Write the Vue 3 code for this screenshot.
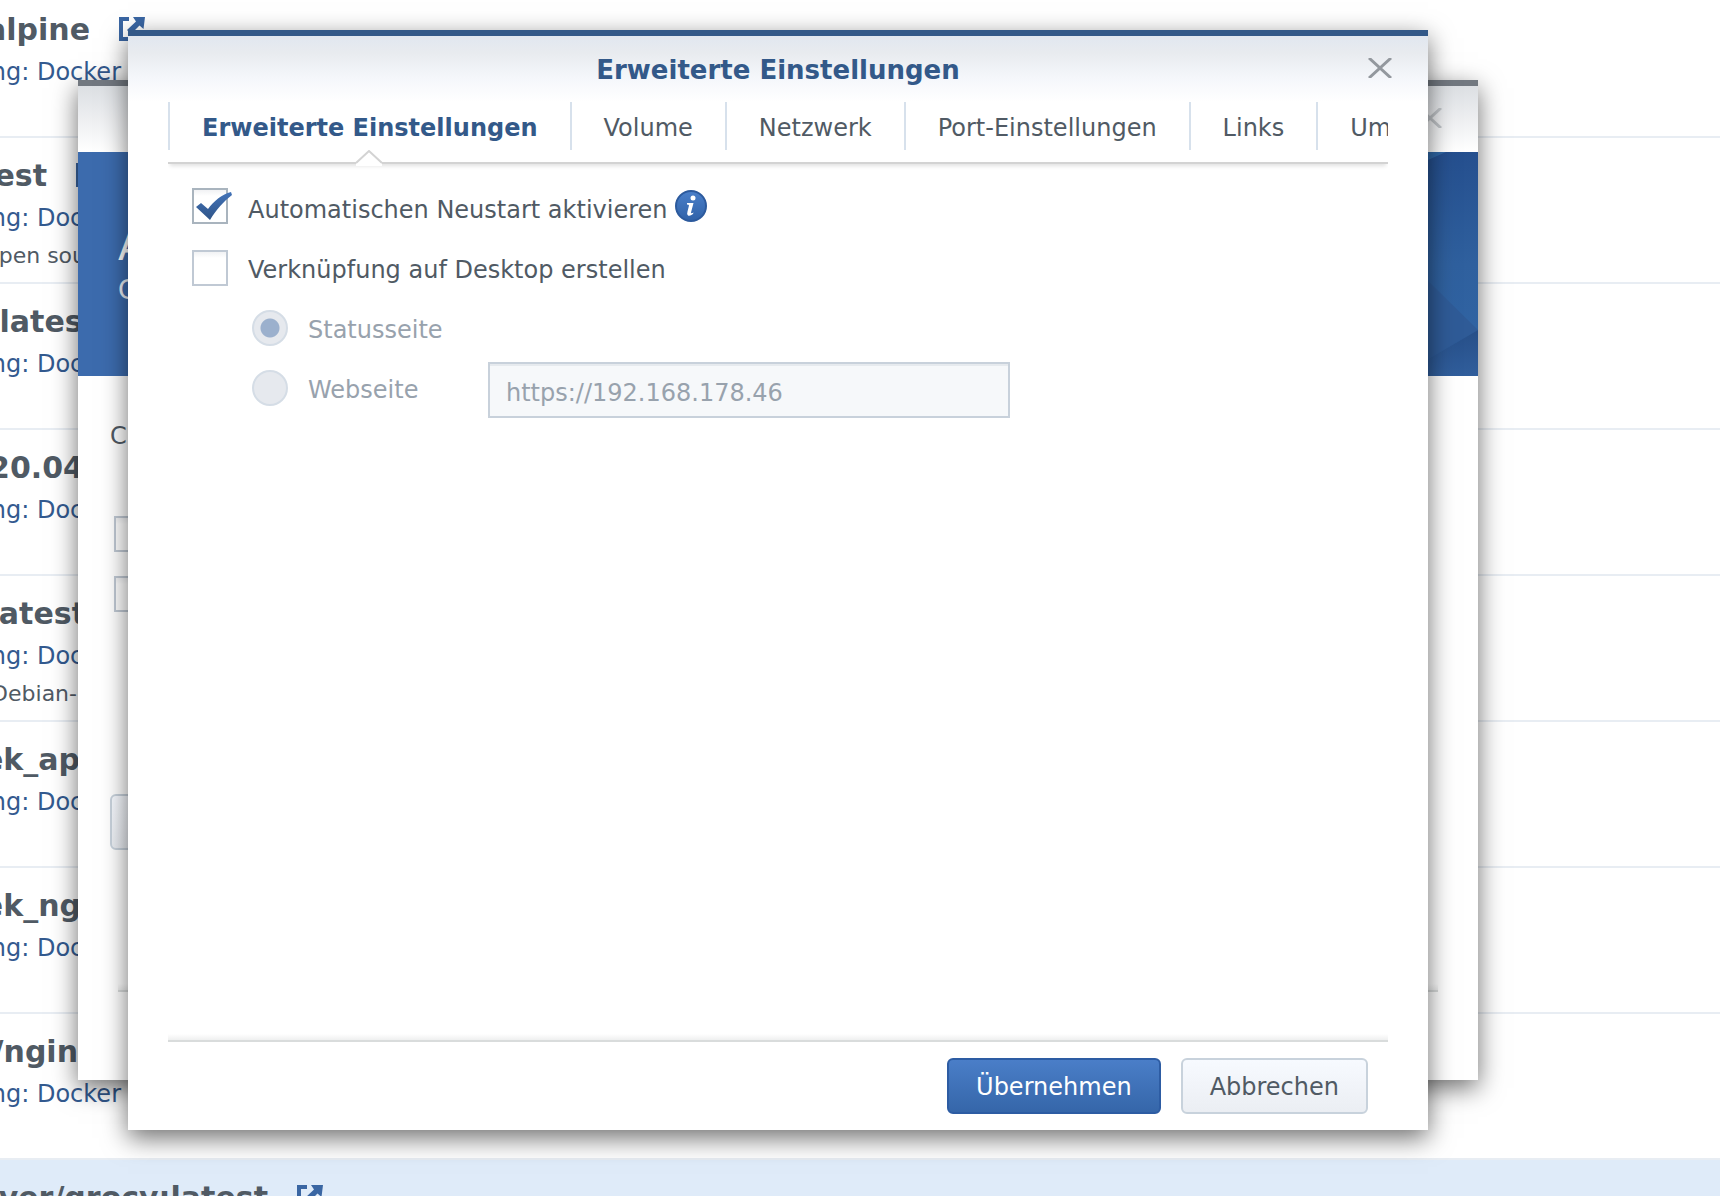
<script setup>
import { ref } from 'vue'

const images = [
  { name: 'alpine', end: 90 },
  { name: 'est', end: 47, note: 'open sou', noteEnd: 86 },
  { name: 'latest', end: 97 },
  { name: '20.04', end: 84 },
  { name: 'latest', end: 86, note: 'Debian-', noteEnd: 77 },
  { name: 'ek_ap', end: 80 },
  { name: 'ek_ng', end: 81 },
  { name: '/ngin', end: 78 },
  { name: 'ver/grocy:latest', end: 268, selected: true },
]

const tabs = ['Erweiterte Einstellungen', 'Volume', 'Netzwerk', 'Port-Einstellungen', 'Links', 'Um']
const activeTab = ref(0)
const autoRestart = ref(true)
const shortcut = ref(false)
const target = ref('status')
const url = ref('https://192.168.178.46')
</script>

<template>
  <div class="desktop">
    <ul class="images">
      <li v-for="(image, i) in images" :key="i" class="image" :class="{ selected: image.selected }">
        <div class="image-head">
          <div class="clip name" :style="{ width: image.end + 'px' }"><strong>{{ image.name }}</strong></div>
          <svg class="open-icon" viewBox="0 0 26 24" width="26" height="24">
            <path d="M10 0H0V24H22V15H18V20H4V4H10Z" />
            <path d="M14 0H26L24.500 12L20.500 8.500L12 17L8 13L17 4.500Z" />
          </svg>
        </div>
        <div class="clip source">ng: Docker</div>
        <div v-if="image.note" class="clip note" :style="{ width: image.noteEnd + 'px' }">{{ image.note }}</div>
      </li>
    </ul>

    <section class="dialog back">
      <header class="titlebar">
        <button class="close" aria-label="Schließen" disabled>
          <svg viewBox="0 0 24 20" width="24" height="20"><path d="M1 0L23 20M23 0L1 20" /></svg>
        </button>
      </header>
      <div class="banner">
        <div class="banner-text">
          <div class="banner-title">A</div>
          <div class="banner-sub">C</div>
        </div>
        <svg class="facets" viewBox="0 0 50 224" width="50" height="224">
          <defs>
            <linearGradient id="sky" x1="0" y1="0" x2="0" y2="1">
              <stop offset="0" stop-color="#254f8e" />
              <stop offset="0.500" stop-color="#2f609e" />
              <stop offset="0.800" stop-color="#3063a2" />
            </linearGradient>
            <linearGradient id="ground" x1="0" y1="0" x2="0" y2="1">
              <stop offset="0" stop-color="#274f88" />
              <stop offset="1" stop-color="#305e9c" />
            </linearGradient>
          </defs>
          <rect width="50" height="224" fill="url(#sky)" />
          <path d="M0 0H18L0 8Z" fill="#3067a5" />
          <path d="M0 129L50 178L0 207Z" fill="#2f5b97" />
          <path d="M50 178V224H0V207Z" fill="url(#ground)" />
        </svg>
      </div>
      <div class="back-body">
        <div class="caption">C</div>
        <input type="checkbox" class="box" aria-label="Option 1" />
        <input type="checkbox" class="box" aria-label="Option 2" />
        <button class="btn wide" aria-label="Erweitert"></button>
      </div>
      <footer class="back-footer"></footer>
    </section>

    <section class="dialog front" role="dialog" aria-labelledby="title">
      <header class="titlebar">
        <h1 id="title">Erweiterte Einstellungen</h1>
        <button class="close" aria-label="Schließen">
          <svg viewBox="0 0 24 20" width="24" height="20"><path d="M1 0L23 20M23 0L1 20" /></svg>
        </button>
      </header>

      <nav class="tabs" role="tablist">
        <button
          v-for="(tab, i) in tabs"
          :key="tab"
          class="tab"
          role="tab"
          :class="{ active: i === activeTab }"
          :aria-selected="i === activeTab"
          @click="activeTab = i"
        >
          {{ tab }}
          <svg v-if="i === activeTab" class="notch" viewBox="0 0 28 16" width="28" height="16">
            <path class="notch-fill" d="M1 13L14 1L27 13V16H1Z" />
            <path class="notch-line" d="M1 13L14 1L27 13" />
          </svg>
        </button>
      </nav>

      <form class="form" @submit.prevent>
        <div class="row lead">
          <span class="tick">
            <input id="restart" v-model="autoRestart" type="checkbox" class="box" />
            <svg v-if="autoRestart" class="mark" viewBox="0 0 40 36" width="40" height="36">
              <defs>
                <linearGradient id="ink" x1="0" y1="0" x2="0" y2="1">
                  <stop offset="0" stop-color="#4373b8" />
                  <stop offset="1" stop-color="#2f5488" />
                </linearGradient>
              </defs>
              <path d="M4 19L9 15L16 21C22 13 30 6 39 4L40 7C32 13 24 22 18 32Z" fill="url(#ink)" />
            </svg>
          </span>
          <label for="restart">Automatischen Neustart aktivieren</label>
          <svg class="info" viewBox="0 0 32 32" width="32" height="32">
            <defs>
              <linearGradient id="disc" x1="0" y1="0" x2="0" y2="1">
                <stop offset="0" stop-color="#4a7fc9" />
                <stop offset="1" stop-color="#3062a8" />
              </linearGradient>
            </defs>
            <circle cx="16" cy="16" r="15" fill="url(#disc)" stroke="#2c5a9d" stroke-width="2" />
            <circle cx="18" cy="8" r="2.500" fill="#fff" />
            <path d="M12 13H18.500L16 22.500Q16 24 18.500 22.500L18 24Q15 26.500 13 25.500Q11.500 24.500 12.500 21.500L14 15.500Q14 14.500 12 14.500Z" fill="#fff" />
          </svg>
        </div>
        <div class="row">
          <input id="shortcut" v-model="shortcut" type="checkbox" class="box" />
          <label for="shortcut">Verknüpfung auf Desktop erstellen</label>
        </div>
        <div class="row nested">
          <input id="status" v-model="target" type="radio" class="radio" name="target" value="status" disabled />
          <label for="status">Statusseite</label>
        </div>
        <div class="row nested">
          <input id="web" v-model="target" type="radio" class="radio" name="target" value="web" disabled />
          <label for="web" class="web-label">Webseite</label>
          <input v-model="url" type="text" class="url" aria-label="Adresse der Webseite" disabled />
        </div>
      </form>

      <footer class="actions">
        <button class="btn primary">Übernehmen</button>
        <button class="btn">Abbrechen</button>
      </footer>
    </section>
  </div>
</template>

<style>
body {
  margin: 0;
  background: #fff;
}
</style>

<style scoped>
.desktop {
  position: relative;
  height: 100vh;
  overflow: hidden;
  font-family: Verdana, "DejaVu Sans", sans-serif;
  font-size: 24px;
  color: #505a64;
}

.desktop *,
.desktop *::before {
  box-sizing: border-box;
}

button,
input {
  margin: 0;
  font: inherit;
  color: inherit;
}

/* image list */
.images {
  list-style: none;
  margin: -8px 0 0;
  padding: 0;
}

.image {
  height: 146px;
  padding-top: 16px;
  border-bottom: 2px solid #e8edf3;
}

.image.selected {
  background: #dfebf9;
}

.image-head {
  display: flex;
  align-items: center;
  gap: 29px;
  height: 44px;
}

.clip {
  display: flex;
  flex: none;
  justify-content: flex-end;
  white-space: nowrap;
}

.name {
  font-size: 30px;
  line-height: 44px;
}

.open-icon {
  fill: #3a66a3;
  margin-top: -2px;
}

.source {
  width: 121px;
  line-height: 40px;
  color: #335a8f;
}

.note {
  font-size: 22px;
  line-height: 36px;
}

/* dialogs */
.dialog {
  position: absolute;
  display: flex;
  flex-direction: column;
  background: #fff;
  border-top: 6px solid #335989;
  box-shadow: 0 8px 24px rgba(0, 0, 0, 0.57);
}

.back {
  inset: 80px 242px 116px 78px;
  border-top-color: #727880;
}

.front {
  inset: 30px 292px 66px 128px;
}

.titlebar {
  display: flex;
  align-items: center;
  flex: none;
  height: 66px;
  padding: 0 36px 2px;
  background: linear-gradient(#e1e7f0, #e8ebef 25%, #f5f7fb 65%, #fff);
}

.back .titlebar {
  justify-content: flex-end;
  background: linear-gradient(#dcdfe3, #fff);
}

h1 {
  flex: 1;
  margin: 0 0 0 24px;
  padding-top: 4px;
  text-align: center;
  font-size: 26px;
  line-height: 32px;
  color: #335989;
}

.close {
  display: flex;
  padding: 0;
  border: 0;
  background: none;
}

.close path {
  fill: none;
  stroke: #93989e;
  stroke-width: 3;
}

.back .close path {
  stroke: #c0c4c8;
}

.banner {
  display: flex;
  justify-content: space-between;
  flex: none;
  height: 224px;
  background: linear-gradient(90deg, #3c6bad 20%, #2b5a99);
}

.banner-text {
  padding: 70px 0 0 40px;
  color: #fff;
}

.banner-title {
  font-size: 40px;
  line-height: 48px;
}

.banner-sub {
  font-size: 26px;
  line-height: 40px;
  opacity: 0.9;
}

.back-body {
  display: flex;
  flex-direction: column;
  align-items: flex-start;
  flex: 1;
  padding: 40px 32px 0;
}

.caption {
  line-height: 40px;
}

.back-body .box {
  margin: 60px 0 0 4px;
}

.back-body .box + .box {
  margin-top: 24px;
}

.wide {
  width: 200px;
  margin-top: 182px;
}

.back-footer {
  height: 96px;
  margin: 0 40px;
}

.back-footer::before,
.actions::before {
  content: "";
  display: block;
  height: 8px;
  border-bottom: 2px solid #d9dcdc;
  background: linear-gradient(#fff, #eff0f0);
}

/* tabs */
.tabs {
  display: flex;
  flex: none;
  height: 62px;
  margin: 0 40px;
  border-bottom: 2px solid #d3d3d3;
  box-shadow: 0 4px 4px -2px rgba(0, 0, 0, 0.12);
  clip-path: inset(0 0 -8px 0);
}

.tab {
  position: relative;
  flex: none;
  height: 48px;
  padding: 4px 32px 0;
  border: 0;
  border-left: 2px solid #d7e1ec;
  background: none;
  line-height: 40px;
  white-space: nowrap;
}

.tab.active {
  font-weight: bold;
  color: #335989;
}

.notch {
  position: absolute;
  top: 48px;
  left: 50%;
  margin-left: -15px;
}

.notch-fill {
  fill: #fff;
}

.notch-line {
  fill: none;
  stroke: #d3d3d3;
  stroke-width: 2;
}

/* form */
.form {
  display: flex;
  flex-direction: column;
  gap: 20px;
  flex: 1;
  padding: 24px 64px;
}

.row {
  display: flex;
  align-items: flex-start;
  gap: 20px;
  height: 40px;
  line-height: 40px;
}

.lead {
  height: 42px;
  line-height: 44px;
}

.nested {
  padding-left: 60px;
  color: #98a2ad;
}

.web-label {
  width: 160px;
}

.tick {
  position: relative;
  display: flex;
}

.box {
  appearance: none;
  flex: none;
  width: 36px;
  height: 36px;
  border: 2px solid #c0c9d4;
  background: linear-gradient(#f1f2f4, #fff 6px);
}

.box:checked {
  border-color: #a9b4be;
}

.mark {
  position: absolute;
  top: 0;
  left: 0;
  pointer-events: none;
}

.info {
  margin: 2px 0 0 -13px;
}

.radio {
  appearance: none;
  flex: none;
  width: 36px;
  height: 36px;
  border: 2px solid #d5dde6;
  border-radius: 50%;
  background: #e6e9ee;
}

.radio:checked {
  background: radial-gradient(circle, #9bb0cd 9px, #e6e9ee 10px);
}

.url {
  width: 522px;
  height: 56px;
  margin-top: -8px;
  padding: 6px 16px 0;
  border: 2px solid #c8d1db;
  background: #f6f8fa;
  box-shadow: inset 0 2px #e6eaee;
}

/* footer */
.actions {
  display: flex;
  flex-wrap: wrap;
  justify-content: flex-end;
  gap: 16px 20px;
  margin: 0 40px 16px;
  padding-right: 20px;
}

.actions::before {
  width: calc(100% + 20px);
  flex: none;
  margin-right: -20px;
}

.btn {
  height: 56px;
  padding: 2px 27px 0;
  border: 2px solid #c8d2dc;
  border-radius: 6px;
  background: linear-gradient(#f7faff, #ebeef3);
}

.primary {
  border-color: #2d5ca3;
  background: linear-gradient(#4a7ec8, #3566a9);
  color: #fff;
}
</style>
